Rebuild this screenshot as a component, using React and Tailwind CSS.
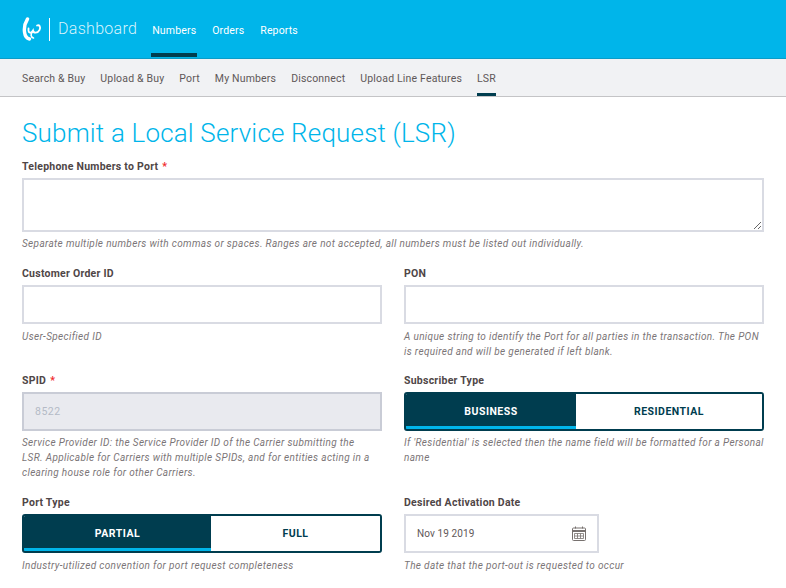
import React from 'react';

const mainNav = ['Numbers', 'Orders', 'Reports'];
const subNav = ['Search & Buy', 'Upload & Buy', 'Port', 'My Numbers', 'Disconnect', 'Upload Line Features', 'LSR'];

function Logo() {
  return (
    <svg width="20" height="24" viewBox="0 0 20 24" fill="none" stroke="white" strokeLinecap="round">
      <path d="M5.500 2C3 6 2 11 2.500 15C3 19 5 21.500 7.500 22" strokeWidth="3.400" />
      <path d="M6.500 11.500C6 15.500 8.500 17.500 11 13.500C11.500 16.500 15.500 16.500 17.500 13C19 10 17.500 7.500 15 8.500" strokeWidth="1.800" />
      <path d="M10.500 15C8.500 17 8.500 20 11.500 21" strokeWidth="1.600" />
    </svg>
  );
}

function CalendarIcon() {
  return (
    <svg width="14" height="15" viewBox="0 0 14 15" fill="none" stroke="#77716f" strokeWidth="1">
      <rect x="0.500" y="2" width="13" height="12.500" rx="1" />
      <path d="M0.500 5H13.500" strokeWidth="2" />
      <path d="M3.500 0.500V2.500M10.500 0.500V2.500" />
      <path d="M2.500 7.500H11.500V12.500H2.500ZM2.500 10H11.500M5.500 7.500V12.500M8.500 7.500V12.500" strokeWidth="0.800" />
    </svg>
  );
}

function Label({ children, required }) {
  return (
    <div className="h-[14px] text-[10.5px] leading-[14px] font-bold tracking-[0.25px] text-[#4f4647] mb-[4px]">
      {children}
      {required && <span className="text-[#f0282d] ml-[4px]">*</span>}
    </div>
  );
}

function Help({ children, tight }) {
  return <p className={`${tight ? 'mt-[4px]' : 'mt-[5px]'} text-[10px] leading-[15px] italic tracking-[0.345px] text-[#7b7577]`}>{children}</p>;
}

function Toggle({ left, right, leftWidth }) {
  return (
    <div className="flex h-[39px] rounded-[3px] border-2 border-[#003d4f] overflow-hidden text-[10.5px] font-bold tracking-[0.5px]">
      <div className={`${leftWidth} flex items-center justify-center pt-[3px] bg-[#003d4f] text-white border-b-[3px] border-[#00b5ea]`}>{left}</div>
      <div className="flex-1 flex items-center justify-center bg-white text-[#003d4f]">{right}</div>
    </div>
  );
}

export default function App() {
  return (
    <div className="h-[588px] overflow-hidden bg-white font-['Roboto',sans-serif]">
      <header className="h-[59px] bg-[#00b5ea] border-b border-[#0a9cc8] flex items-stretch pl-[22px]">
        <div className="flex items-center h-full">
          <Logo />
          <div className="ml-[7px] w-px h-[23px] bg-white" />
          <span className="ml-[8px] text-[16px] font-light tracking-[0.3px] text-[#d8f3fc]">Dashboard</span>
        </div>
        <nav className="flex ml-[14px] gap-[14px]">
          {mainNav.map((item, i) => (
            <div key={item} className={`flex items-center px-[1px] pt-[8px] mb-[1px] border-b-[4px] text-[10.5px] tracking-[0.15px] text-white ${i === 0 ? 'border-[#003d4f]' : 'border-transparent'}`}>
              {item}
            </div>
          ))}
        </nav>
      </header>

      <nav className="h-[38px] bg-[#f1f2f4] border-b border-[#c4c4c6] flex pl-[22px] gap-[15px]">
        {subNav.map((item) => (
          <div key={item} className={`flex items-center pt-[5px] border-b-[3px] text-[10.5px] tracking-[0.17px] text-[#5f5859] ${item === 'LSR' ? 'border-[#003d4f]' : 'border-transparent'}`}>
            {item}
          </div>
        ))}
      </nav>

      <main className="px-[22px]">
        <h1 className="mt-[18px] h-[36px] text-[26px] leading-[36px] font-light tracking-[0.17px] text-[#00b5ea]">Submit a Local Service Request (LSR)</h1>

        <div className="mt-[9px]">
          <Label required>Telephone Numbers to Port</Label>
          <textarea className="block w-full h-[54px] border-2 border-[#d9dbe3] bg-white outline-none" />
          <Help tight>Separate multiple numbers with commas or spaces. Ranges are not accepted, all numbers must be listed out individually.</Help>
        </div>

        <div className="grid grid-cols-2 gap-x-[22px] mt-[16px]">
          <div className="h-[107px]">
            <Label>Customer Order ID</Label>
            <div className="h-[39px] border-2 border-[#d9dbe3]" />
            <Help>User-Specified ID</Help>
          </div>
          <div className="h-[107px]">
            <Label>PON</Label>
            <div className="h-[39px] border-2 border-[#d9dbe3]" />
            <Help>A unique string to identify the Port for all parties in the transaction. The PON is required and will be generated if left blank.</Help>
          </div>

          <div className="h-[122px]">
            <Label required>SPID</Label>
            <div className="h-[39px] border-2 border-[#c9ccd6] bg-[#e9eaef] flex items-center pl-[11px] text-[10.5px] tracking-[0.5px] text-[#b4bac6]">8522</div>
            <div className="pr-[8px]">
              <Help tight>Service Provider ID: the Service Provider ID of the Carrier submitting the LSR. Applicable for Carriers with multiple SPIDs, and for entities acting in a clearing house role for other Carriers.</Help>
            </div>
          </div>
          <div className="h-[122px]">
            <Label>Subscriber Type</Label>
            <Toggle left="BUSINESS" right="RESIDENTIAL" leftWidth="w-[170px]" />
            <Help tight>If 'Residential' is selected then the name field will be formatted for a Personal name</Help>
          </div>

          <div>
            <Label>Port Type</Label>
            <Toggle left="PARTIAL" right="FULL" leftWidth="w-[187px]" />
            <Help>Industry-utilized convention for port request completeness</Help>
          </div>
          <div>
            <Label>Desired Activation Date</Label>
            <div className="w-[195px] h-[39px] border-2 border-[#d9dbe3] flex items-center justify-between pl-[11px] pr-[11px] text-[10px] tracking-[0.1px] text-[#5f5859]">
              <span>Nov 19 2019</span>
              <CalendarIcon />
            </div>
            <Help>The date that the port-out is requested to occur</Help>
          </div>
        </div>
      </main>
    </div>
  );
}
